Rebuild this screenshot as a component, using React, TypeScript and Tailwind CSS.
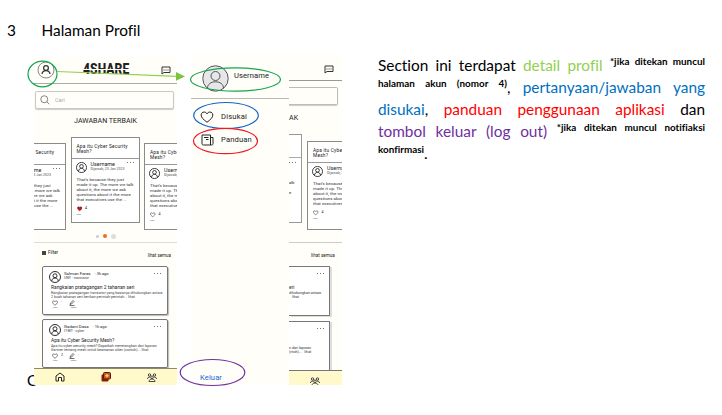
import React from "react";

const body = "font-['Lato','Liberation_Sans',sans-serif] [font-variant-ligatures:none]";

function Avatar({ size }: { size: number }) {
  return (
    <svg width={size} height={size} viewBox="0 0 24 24" fill="none" stroke="#222" strokeWidth="1.9" className="block shrink-0">
      <circle cx="12" cy="12" r="11" />
      <circle cx="12" cy="9.5" r="4" />
      <path d="M5.5 20c.5-4 3-6 6.500-6s6 2 6.500 6" />
    </svg>
  );
}

function Heart({ size, fill = "none", stroke = "#222", weight = 2.2 }: { size: number; fill?: string; stroke?: string; weight?: number }) {
  return (
    <svg width={size} height={size} viewBox="0 0 24 24" fill={fill} stroke={stroke} strokeWidth={weight} className="block shrink-0">
      <path d="M12 21C6 16.500 2 13 2 8.500 2 5.500 4.300 3.500 7 3.500c2.200 0 4 1.200 5 3.100 1-1.900 2.800-3.100 5-3.100 2.700 0 5 2 5 5 0 4.500-4 8-10 12.500z" />
    </svg>
  );
}

function Chat({ className = "" }: { className?: string }) {
  return (
    <svg width="10" height="9" viewBox="0 0 20 18" fill="none" stroke="#333" strokeWidth="2" className={`block shrink-0 ${className}`}>
      <path d="M2 2h16v11H6l-4 3z" />
      <path d="M5 8h2m2 0h2m2 0h2" strokeWidth="2.4" />
    </svg>
  );
}

function People() {
  return (
    <svg width="10" height="9" viewBox="0 0 20 18" fill="none" stroke="#333" strokeWidth="1.8" className="block shrink-0">
      <circle cx="5" cy="4" r="2.400" />
      <circle cx="15" cy="4" r="2.400" />
      <circle cx="10" cy="8.500" r="2.600" />
      <path d="M1 12c0-3 2-4 5-4m13 4c0-3-2-4-5-4M4 17c0-3 2.500-5 6-5s6 2 6 5z" />
    </svg>
  );
}

function Pencil() {
  return (
    <svg width="6" height="6" viewBox="0 0 12 12" fill="none" stroke="#222" strokeWidth="1.300" className="block shrink-0">
      <path d="M2 9l1-3 5-5 2 2-5 5zM1 11h10" />
    </svg>
  );
}

function Dots({ className = "" }: { className?: string }) {
  return (
    <span className={`flex shrink-0 gap-[1.8px] ${className}`}>
      <i className="size-[1.2px] rounded-full bg-[#444]" />
      <i className="size-[1.2px] rounded-full bg-[#444]" />
      <i className="size-[1.2px] rounded-full bg-[#444]" />
    </span>
  );
}

function AnswerCard({ liked = false, className = "" }: { liked?: boolean; className?: string }) {
  return (
    <article className={`w-[69px] shrink-0 border border-[#8b8b88] bg-white ${className}`}>
      <h3 className="h-[21px] border-b border-[#999] pt-[6px] pl-[5px] text-[4.800px] leading-[5.200px] tracking-[0.200px] whitespace-nowrap">
        Apa itu Cyber Security
        <br />
        Mesh?
      </h3>
      <div className="flex pt-[3px] pl-[4px]">
        <Avatar size={11} />
        <div className="-mt-px ml-[4px] whitespace-nowrap">
          <p className="text-[5.400px] leading-[6px]">Username</p>
          <p className="text-[3.600px] leading-[4px] text-[#555]">Dijawab, 23 Jan 2023</p>
        </div>
        <Dots className="ml-[2px]" />
      </div>
      <p className="mt-[4px] pl-[5px] text-[4.400px] leading-[5px] tracking-[0.030px] whitespace-nowrap text-[#333]">
        That's because they just
        <br />
        made it up. The more we talk
        <br />
        about it, the more we ask
        <br />
        questions about it the more
        <br />
        that executives use the ...
      </p>
      <div className="mt-[4px] flex items-center gap-[3px] pl-[5px] text-[3.600px] leading-[5px]">
        {liked ? <Heart size={5.5} fill="#c31620" stroke="#7d1016" /> : <Heart size={5.5} />}
        <span>4</span>
      </div>
      <p className="pl-[5px] text-[2px] leading-[4px] text-[#555]">Suka</p>
    </article>
  );
}

type Question = { author: string; time: string; meta: string; title: string; lines: string[]; likes: string };

const questions: Question[] = [
  {
    author: "Salman Faras",
    time: "· 3h ago",
    meta: "UNY · transistor",
    title: "Rangkaian pratagangan 2 tahanan seri",
    lines: ["Rangkaian pratagangan transistor yang basisnya dihubungkan antara", "2 buah tahanan seri berikan perintah-perintah...  lihat"],
    likes: "-",
  },
  {
    author: "Gadani Dasa",
    time: "· 1h ago",
    meta: "IT-BIT · cyber",
    title: "Apa itu Cyber Security Mesh?",
    lines: ["Apa itu cyber security mesh? Dapatkah menerangkan dari laporan", "Gartner tentang mesh untuk keamanan siber (contoh)...  lihat"],
    likes: "2",
  },
];

function QuestionCard({ q }: { q: Question }) {
  return (
    <article className="h-[49px] w-[126px] shrink-0 rounded-[2px] border border-[#777] bg-white pt-[4px] pl-[6px] shadow-[1px_1px_1px_#bbb]">
      <div className="flex">
        <Avatar size={12} />
        <div className="ml-[3px] whitespace-nowrap">
          <p className="text-[4.400px] leading-[5px]">
            {q.author} <span className="ml-[3px] text-[3.900px]">{q.time}</span>
          </p>
          <p className="text-[3.600px] leading-[5px] text-[#444]">{q.meta}</p>
        </div>
        <Dots className="mt-[2px] mr-[6px] ml-auto" />
      </div>
      <h3 className="mt-[0.500px] ml-[2px] text-[4.900px] leading-[6px] whitespace-nowrap">{q.title}</h3>
      <p className="mt-[1px] ml-[2px] text-[3.650px] leading-[4.200px] whitespace-nowrap text-[#444]">
        {q.lines[0]}
        <br />
        {q.lines[1]}
      </p>
      <div className="mt-[1.500px] ml-[3px] flex gap-[3px] text-[3.500px] leading-[5px]">
        <Heart size={6} />
        <span className="w-[5px]">{q.likes}</span>
        <Pencil />
        <span>-</span>
      </div>
      <p className="ml-[4px] flex gap-[13px] text-[2px] leading-[3px] text-[#555]">
        <span>Suka</span>
        <span>Jawab</span>
      </p>
    </article>
  );
}

function Logo() {
  return (
    <span className="relative ml-[28px] block h-[12px] w-[46px] text-[12.500px] leading-[12px] font-black text-[#222]">
      <span className="block origin-left scale-x-[0.960] scale-y-[1.120] tracking-[0.100px]">4SHARE</span>
      <i className="absolute inset-x-0 top-[5px] h-[1px] bg-[#fffef8]" />
    </span>
  );
}

function HomeScreen() {
  return (
    <section className="relative mt-[3px] flex h-[328px] w-[143px] shrink-0 flex-col overflow-hidden bg-[#fffef8]">
      <header className="flex h-[27px] shrink-0 items-center border-b border-[#aaa]">
        <svg width="18" height="18" viewBox="0 0 18 18" fill="none" stroke="#333" className="ml-[3px] block">
          <circle cx="9" cy="9" r="8" stroke="#888" strokeWidth="1" />
          <circle cx="9" cy="7" r="2.400" strokeWidth="1.200" />
          <path d="M5 13c.3-2 1.600-3.300 4-3.300s3.700 1.300 4 3.300" strokeWidth="1.300" />
        </svg>
        <Logo />
        <Chat className="ml-[32px]" />
      </header>
      <div className="mt-[7px] ml-[1px] flex h-[18px] w-[139px] shrink-0 items-center gap-[5px] rounded-[2px] border border-[#c8c8c4] bg-[#fffefb] pl-[4px] shadow-[0_1px_1px_#ccc]">
        <svg width="10" height="10" viewBox="0 0 20 20" fill="none" stroke="#777" strokeWidth="1.800">
          <circle cx="8.500" cy="8.500" r="7" />
          <path d="M13.500 13.500l5 5" />
        </svg>
        <span className="text-[5.500px] text-[#aaa]">Cari</span>
      </div>
      <h2 className="mt-[7px] h-[10px] shrink-0 text-center text-[7.100px] leading-[10px] whitespace-nowrap">JAWABAN TERBAIK</h2>
      <div className="mt-[11px] -ml-[37px] flex h-[94px] shrink-0 gap-[4.500px]">
        <AnswerCard className="mt-[6px] h-[87px]" />
        <AnswerCard liked className="h-[86px]" />
        <AnswerCard className="mt-[6px] h-[87px]" />
      </div>
      <div className="mt-[2px] ml-[62px] flex h-[6px] shrink-0 items-center gap-[4px]">
        <i className="size-[3px] rounded-full bg-[#ccc]" />
        <i className="size-[4px] rounded-full bg-[#f36a21]" />
        <i className="size-[5px] rounded-full bg-[#ddd]" />
      </div>
      <hr className="mt-[3px] shrink-0 border-[#ddd]" />
      <div className="flex h-[23px] shrink-0 justify-between pt-[7px] pr-[6px] pl-[8px] text-[4.500px] leading-[6px]">
        <span className="flex h-[6px] items-center gap-[2px]">
          <i className="size-[4px] bg-[#444]" />
          Filter
        </span>
        <span className="mt-[3px]">lihat semua</span>
      </div>
      <div className="flex shrink-0 flex-col gap-[4px] pl-[8px]">
        {questions.map((q) => (
          <QuestionCard key={q.title} q={q} />
        ))}
      </div>
      <nav className="absolute inset-x-0 bottom-0 flex h-[17px] items-center border-t border-[#8d8a6c] bg-[#fff9cc] pl-[21px]">
        <svg width="10" height="10" viewBox="0 0 20 20" fill="none" stroke="#222" strokeWidth="2">
          <path d="M2 8l8-6 8 6v10h-5v-7H7v7H2z" />
        </svg>
        <svg width="10" height="10" viewBox="0 0 20 20" className="ml-[36px]">
          <rect x="1" y="5" width="14" height="14" rx="2" fill="#8b1c0d" />
          <rect x="5" y="1" width="14" height="13" rx="2" fill="#c7571b" stroke="#5c180b" strokeWidth="2" />
          <path d="M12 4v7M8.500 7.500h7" stroke="#ffe3a0" strokeWidth="2" />
        </svg>
        <span className="ml-[36px]">
          <People />
        </span>
      </nav>
    </section>
  );
}

function Drawer() {
  return (
    <aside className="flex h-[331px] w-[98px] shrink-0 flex-col bg-[#fffef9] text-[7.600px]">
      <div className="flex h-[45px] shrink-0 border-b border-[#b9b9b5] pt-[11px] pl-[11px]">
        <svg width="27" height="27" viewBox="0 0 27 27" fill="none" stroke="#555">
          <circle cx="13.500" cy="13.500" r="12.700" fill="#e7e7e9" />
          <circle cx="13.500" cy="11" r="4.500" />
          <path d="M5.500 23.400c0-4.400 3.500-6.600 8-6.600s8 2.200 8 6.600" />
        </svg>
        <span className="mt-[6px] ml-[5px] h-[10px] leading-[10px] tracking-[0.080px]">Username</span>
      </div>
      <div className="mt-[12px] flex h-[12px] items-center pl-[9px]">
        <Heart size={14} weight={1.700} />
        <span className="ml-[7px] tracking-[0.200px]">Disukai</span>
      </div>
      <div className="mt-[11px] flex h-[12px] items-center pl-[10px]">
        <svg width="13" height="12" viewBox="0 0 26 24" fill="none" stroke="#222" strokeWidth="2">
          <path d="M2 2h17v20H5c-2 0-3-1-3-3zM19 7h5v12c0 2-1 3-2.500 3H19M6 7h9m-5 4h5" />
        </svg>
        <span className="ml-[7px] tracking-[0.150px]">Panduan</span>
      </div>
      <p className="mt-auto mb-[2px] ml-[9px] leading-[10px] tracking-[0.100px] text-[#1e63d6]">Keluar</p>
    </aside>
  );
}

function CoveredScreen() {
  return (
    <div className="flex h-[331px] w-[53px] shrink-0 flex-col overflow-hidden bg-[#fffef8]">
      <header className="h-[27px] shrink-0 border-b border-[#999] pt-[11px] pl-[35px]">
        <Chat />
      </header>
      <div className="mt-[6px] h-[18px] w-[49px] shrink-0 rounded-r-[2px] border border-l-0 border-[#bbb] shadow-[0_1px_1px_#ccc]" />
      <p className="mt-[8px] h-[10px] shrink-0 text-[7.100px] leading-[10px]">AK</p>
      <div className="mt-[10px] flex h-[97px] shrink-0 gap-[5px]">
        <div className="mt-px h-[89px] w-[13px] shrink-0 border border-l-0 border-[#999] bg-white text-[4.200px] leading-[5px]">
          <div className="h-[23px] border-b border-[#aaa]" />
          <Dots className="mt-[4px]" />
          <p className="mt-[17px]">alk</p>
          <p className="mt-[5px]">e</p>
        </div>
        <AnswerCard className="mt-[8px] h-[89px]" />
      </div>
      <hr className="mt-[12px] shrink-0 border-[#ccc]" />
      <p className="mt-[9px] ml-[22px] h-[14px] shrink-0 text-[4.600px] leading-[8px] whitespace-nowrap">lihat semua</p>
      {questions.map((q, i) => (
        <article
          key={q.title}
          className="mb-[5px] h-[50px] w-[41px] shrink-0 rounded-r-[1px] border border-l-0 border-[#777] bg-white text-[3.650px] leading-[4.200px] text-[#333] shadow-[2px_1px_0_#ddd]"
        >
          <Dots className="mt-[6px] mr-[5px] justify-end" />
          <p className="mt-[11px] h-[6px] text-[5px]">{i === 0 ? "eri" : ""}</p>
          <p className="whitespace-nowrap">{i === 0 ? "dihubungkan antara" : "n dari laporan"}</p>
          <p className={i === 0 ? "ml-[3px] whitespace-nowrap" : "whitespace-pre"}>{i === 0 ? "lihat" : "(ntoh)...   lihat"}</p>
        </article>
      ))}
      <nav className="relative -mt-[6px] h-[20px] shrink-0 border-t border-[#777] bg-[#fff9cc] pt-[6px] pl-[21px]">
        <People />
      </nav>
    </div>
  );
}

function Annotations() {
  return (
    <svg width="722" height="415" viewBox="0 0 722 415" fill="none" className="pointer-events-none absolute inset-0">
      <ellipse cx="42.500" cy="74" rx="14.500" ry="12.800" stroke="#14a650" strokeWidth="1.200" />
      <path d="M57 71.500L177 76.300" stroke="#92d050" strokeWidth="1.200" />
      <path d="M176 72l9 4.500-9 4.200z" fill="#7fc241" />
      <ellipse cx="235.500" cy="79.500" rx="45" ry="11.700" stroke="#14a650" strokeWidth="1.200" />
      <ellipse cx="226" cy="115.500" rx="32.300" ry="13" stroke="#1464c8" strokeWidth="1.200" />
      <ellipse cx="225.500" cy="141" rx="32" ry="12.700" stroke="#f01822" strokeWidth="1.200" />
      <ellipse cx="212.500" cy="372.500" rx="32.300" ry="13" stroke="#7030a0" strokeWidth="1.200" />
    </svg>
  );
}

function Note({ children }: { children: React.ReactNode }) {
  return <span className="relative -top-[6px] text-[9.900px] leading-none font-bold [word-spacing:-0.5px] text-black">{children}</span>;
}

function Line({ children, last = false }: { children: React.ReactNode; last?: boolean }) {
  return <p className={`h-[22px] leading-[22px] whitespace-nowrap ${last ? "" : "[text-align-last:justify]"}`}>{children}</p>;
}

export default function App() {
  return (
    <main className="relative h-[415px] w-[722px] overflow-hidden bg-white font-[Roboto,'Liberation_Sans',sans-serif] text-[#222]">
      <h1 className={`${body} flex h-[54px] pt-[20px] pl-[7px] text-[15.400px] leading-[20px] text-black`}>
        <span className="w-[34.500px]">3</span>
        <span>Halaman Profil</span>
      </h1>
      <span className={`${body} absolute top-[370px] left-[27px] text-[14.900px] leading-[20px] text-black`}>C</span>
      <div className="flex pl-[34px]">
        <HomeScreen />
        <div className="ml-[14px] flex">
          <Drawer />
          <CoveredScreen />
        </div>
        <div className={`${body} ml-[36px] w-[327px] text-[15.400px] text-black`}>
          <Line>
            Section ini terdapat <span className="text-[#92d050]">detail profil</span> <Note>*jika ditekan muncul</Note>
          </Line>
          <Line>
            <Note>halaman akun (nomor 4)</Note>, <span className="text-[#0070c0]">pertanyaan/jawaban yang</span>
          </Line>
          <Line>
            <span className="text-[#0070c0]">disukai</span>, <span className="text-[#ff0000]">panduan penggunaan aplikasi</span> dan
          </Line>
          <Line>
            <span className="text-[#7030a0]">tombol keluar (log out)</span> <Note>*jika ditekan muncul notifiaksi</Note>
          </Line>
          <Line last>
            <Note>konfirmasi</Note>.
          </Line>
        </div>
      </div>
      <Annotations />
    </main>
  );
}
